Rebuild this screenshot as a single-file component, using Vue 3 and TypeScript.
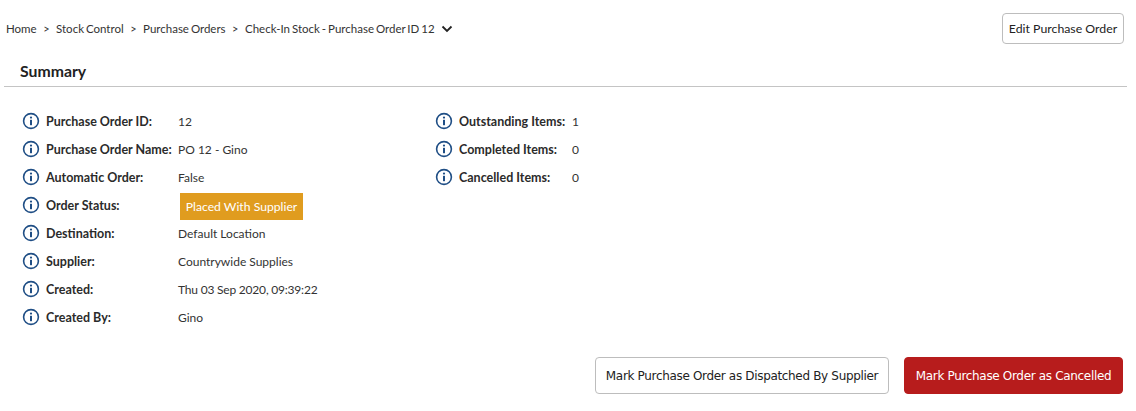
<template>
  <div class="page">
    <header class="topbar">
      <nav class="crumbs">
        <template v-for="(c, i) in crumbs" :key="c">
          <span class="crumb">{{ c }}</span>
          <span v-if="i < crumbs.length - 1" class="sep">&gt;</span>
        </template>
        <svg class="chevron" width="12" height="8" viewBox="0 0 12 8">
          <path d="M1.5 1.5 6 6l4.5-4.5" fill="none" stroke="#222" stroke-width="1.8" />
        </svg>
      </nav>
      <button class="btn edit">Edit Purchase Order</button>
    </header>

    <h2 class="title">Summary</h2>

    <section class="summary">
      <div class="col left">
        <div v-for="row in leftRows" :key="row.label" class="row">
          <svg class="info" width="18" height="18" viewBox="0 0 18 18">
            <circle cx="9" cy="9" r="7.4" fill="none" stroke="#1f4e85" stroke-width="1.6" />
            <circle cx="9" cy="5.6" r="1.1" fill="#1f4e85" />
            <rect x="8" y="7.8" width="2" height="5.4" fill="#1f4e85" />
          </svg>
          <span class="label">{{ row.label }}</span>
          <span v-if="row.badge" class="badge">{{ row.value }}</span>
          <span v-else class="value" :class="{ date: row.label === 'Created:' }">{{ row.value }}</span>
        </div>
      </div>
      <div class="col right">
        <div v-for="row in rightRows" :key="row.label" class="row">
          <svg class="info" width="18" height="18" viewBox="0 0 18 18">
            <circle cx="9" cy="9" r="7.4" fill="none" stroke="#1f4e85" stroke-width="1.6" />
            <circle cx="9" cy="5.6" r="1.1" fill="#1f4e85" />
            <rect x="8" y="7.8" width="2" height="5.4" fill="#1f4e85" />
          </svg>
          <span class="label">{{ row.label }}</span>
          <span class="value">{{ row.value }}</span>
        </div>
      </div>
    </section>

    <footer class="actions">
      <button class="btn action">Mark Purchase Order as Dispatched By Supplier</button>
      <button class="btn action danger">Mark Purchase Order as Cancelled</button>
    </footer>
  </div>
</template>

<script setup lang="ts">
interface Row {
  label: string
  value: string
  badge?: boolean
}

const crumbs = ['Home', 'Stock Control', 'Purchase Orders', 'Check-In Stock - Purchase Order ID 12']

const leftRows: Row[] = [
  { label: 'Purchase Order ID:', value: '12' },
  { label: 'Purchase Order Name:', value: 'PO 12 - Gino' },
  { label: 'Automatic Order:', value: 'False' },
  { label: 'Order Status:', value: 'Placed With Supplier', badge: true },
  { label: 'Destination:', value: 'Default Location' },
  { label: 'Supplier:', value: 'Countrywide Supplies' },
  { label: 'Created:', value: 'Thu 03 Sep 2020, 09:39:22' },
  { label: 'Created By:', value: 'Gino' }
]

const rightRows: Row[] = [
  { label: 'Outstanding Items:', value: '1' },
  { label: 'Completed Items:', value: '0' },
  { label: 'Cancelled Items:', value: '0' }
]
</script>

<style>
html,
body {
  background: #fff;
}
</style>

<style scoped>
.page {
  width: 1136px;
  height: 411px;
  overflow: hidden;
  box-sizing: border-box;
  font-family: "Lato", "Noto Sans", sans-serif;
  font-size: 12.5px;
  color: #222;
}

.topbar {
  display: flex;
  justify-content: space-between;
  align-items: center;
  padding: 13px 12px 0 6px;
  height: 31px;
}

.crumbs {
  display: flex;
  align-items: center;
  font-size: 11.5px;
  word-spacing: -1px;
  color: #333;
}

.sep {
  margin: 0 6.5px;
  font-size: 11px;
}

.chevron {
  margin-left: 6px;
}

.btn {
  box-sizing: border-box;
  background: #fff;
  border: 1px solid #bdbdbd;
  border-radius: 4px;
  color: #222;
  padding: 0;
}

.edit {
  width: 122px;
  height: 31px;
  font-family: "Lato", sans-serif;
  font-size: 12.3px;
}

.title {
  margin: 18px 9px 0 4px;
  padding: 0 0 6px 16px;
  border-bottom: 1px solid #c4c4c4;
  font-size: 15.8px;
  font-weight: 700;
  line-height: 18px;
  height: 18px;
  color: #222;
}

.summary {
  display: flex;
  padding: 20px 0 0 22px;
}

.col {
  display: flex;
  flex-direction: column;
}

.left {
  width: 413px;
}

.row {
  display: flex;
  align-items: center;
  height: 28px;
}

.info {
  flex: none;
  margin-right: 6px;
}

.label {
  font-weight: 700;
  width: 132px;
  white-space: nowrap;
  color: #2b2b2b;
}

.right .label {
  width: 113px;
}

.value {
  font-size: 12px;
  color: #333;
}

.date {
  letter-spacing: -0.2px;
}

.badge {
  box-sizing: border-box;
  margin: 2px 0 0 2px;
  width: 123px;
  height: 27px;
  line-height: 27px;
  text-align: center;
  background: #e09c1f;
  color: #fff;
  font-size: 12.2px;
}

.actions {
  display: flex;
  justify-content: flex-end;
  gap: 15px;
  padding: 26px 13px 0 0;
}

.action {
  height: 37px;
  width: 294px;
  font-family: "DejaVu Sans", sans-serif;
  font-size: 12px;
  letter-spacing: -0.33px;
}

.danger {
  width: 219px;
  background: #b71c1c;
  border-color: #b71c1c;
  color: #fff;
}
</style>
